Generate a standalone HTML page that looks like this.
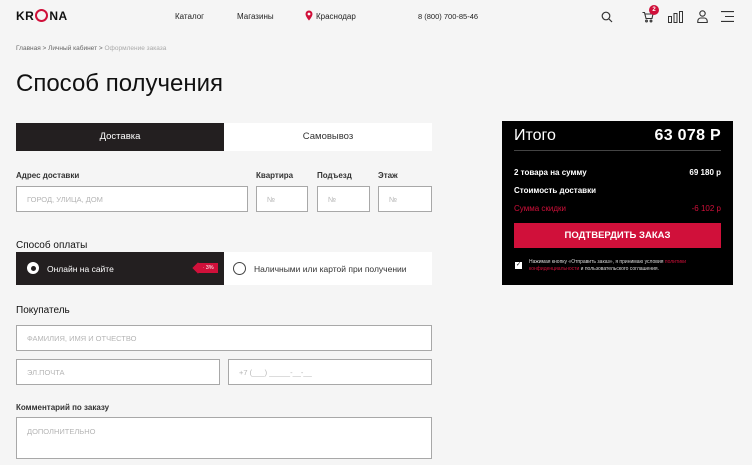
<!DOCTYPE html><html><head><meta charset="utf-8"><style>
*{box-sizing:border-box;margin:0;padding:0}
body{width:752px;height:465px;overflow:hidden;background:#f5f5f5;font-family:"Liberation Sans",sans-serif;color:#222;position:relative}
.a{position:absolute;white-space:nowrap}
.r{position:absolute;white-space:nowrap;right:31px}
.in{position:absolute;background:#fff;border:1px solid #a8a8a8;font-size:7.5px;color:#b5b5b5;padding-left:10px;display:flex;align-items:center}
.lb{font-size:8px;font-weight:bold;color:#333}
</style></head><body>
<div class="a" style="left:16px;top:9px;font-size:12px;font-weight:bold;letter-spacing:0.5px;color:#111">KR<span style="display:inline-block;width:13px;height:13px;border:2px solid #d0103a;border-radius:50%;vertical-align:-2px;margin:0 1px"></span>NA</div>
<div class="a" style="left:175px;top:12px;font-size:8px">Каталог</div>
<div class="a" style="left:237px;top:12px;font-size:8px">Магазины</div>
<svg class="a" style="left:305px;top:10px" width="8" height="11" viewBox="0 0 8 11"><path d="M4 0.5A3.5 3.5 0 0 1 7.5 4C7.5 6.5 4 10.5 4 10.5S0.5 6.5 0.5 4A3.5 3.5 0 0 1 4 .5Z" fill="#d0103a"/><circle cx="4" cy="4" r="1.4" fill="#fff"/></svg>
<div class="a" style="left:316px;top:12px;font-size:8px">Краснодар</div>
<div class="a" style="left:418px;top:12px;font-size:7.5px">8 (800) 700-85-46</div>
<svg class="a" style="left:601px;top:11px" width="12" height="12" viewBox="0 0 12 12" fill="none" stroke="#333" stroke-width="1.2"><circle cx="5" cy="5" r="3.8"/><path d="M8 8l3 3"/></svg>
<svg class="a" style="left:642px;top:11px" width="12" height="12" viewBox="0 0 12 12" fill="none" stroke="#333" stroke-width="1.1"><path d="M0.5 1.5h2l1.5 6h6l1-4.5H3"/><circle cx="4.5" cy="10" r="0.9"/><circle cx="9" cy="10" r="0.9"/></svg>
<div class="a" style="left:649px;top:5px;width:10px;height:10px;border-radius:50%;background:#d0103a;color:#fff;font-size:6px;text-align:center;line-height:10px;font-weight:bold">2</div>
<svg class="a" style="left:668px;top:11px" width="16" height="12" viewBox="0 0 16 12" fill="none" stroke="#333" stroke-width="1"><rect x="0.5" y="5.5" width="3" height="6"/><rect x="6" y="2.5" width="3" height="9"/><rect x="11.5" y="0.5" width="3" height="11"/></svg>
<svg class="a" style="left:697px;top:10px" width="11" height="13" viewBox="0 0 11 13" fill="none" stroke="#333" stroke-width="1.1"><circle cx="5.5" cy="3.5" r="2.7"/><path d="M0.8 12.5v-1.5a3 3 0 0 1 3-3h3.4a3 3 0 0 1 3 3v1.5z"/></svg>
<svg class="a" style="left:721px;top:11px" width="13" height="11" viewBox="0 0 13 11" stroke="#333" stroke-width="1.1"><path d="M0 0.6h13M4 5.5h9M0 10.4h13"/></svg>
<div class="a" style="left:16px;top:45px;font-size:6.5px;color:#666">Главная &gt; Личный кабинет &gt; <span style="color:#aaa">Оформление заказа</span></div>
<div class="a" style="left:16px;top:70px;font-size:24px;color:#111">Способ получения</div>
<div class="a" style="left:16px;top:123px;width:208px;height:28px;background:#231f20;color:#fff;font-size:9.5px;text-align:center;line-height:28px">Доставка</div>
<div class="a" style="left:224px;top:123px;width:208px;height:28px;background:#fff;color:#333;font-size:9.5px;text-align:center;line-height:28px">Самовывоз</div>
<div class="a lb" style="left:16px;top:171px">Адрес доставки</div>
<div class="a lb" style="left:256px;top:171px">Квартира</div>
<div class="a lb" style="left:317px;top:171px">Подъезд</div>
<div class="a lb" style="left:378px;top:171px">Этаж</div>
<div class="in" style="left:16px;top:186px;width:232px;height:26px">ГОРОД, УЛИЦА, ДОМ</div>
<div class="in" style="left:256px;top:186px;width:52px;height:26px">№</div>
<div class="in" style="left:317px;top:186px;width:53px;height:26px">№</div>
<div class="in" style="left:378px;top:186px;width:54px;height:26px">№</div>
<div class="a" style="left:16px;top:240px;font-size:10px;color:#111">Способ оплаты</div>
<div class="a" style="left:16px;top:252px;width:208px;height:33px;background:#231f20"></div>
<div class="a" style="left:27px;top:262px;width:12px;height:12px;border-radius:50%;background:#fff"></div>
<div class="a" style="left:30.5px;top:265.5px;width:5px;height:5px;border-radius:50%;background:#231f20"></div>
<div class="a" style="left:47px;top:264px;font-size:8.5px;color:#fff">Онлайн на сайте</div>
<div class="a" style="left:198px;top:263px;width:20px;height:10px;background:#d0103a;color:#fff;font-size:5.5px;line-height:10px;text-align:center">- 3%</div>
<div class="a" style="left:194px;top:264px;width:8px;height:8px;background:#d0103a;transform:rotate(45deg)"></div>
<div class="a" style="left:224px;top:252px;width:208px;height:33px;background:#fff"></div>
<div class="a" style="left:233px;top:262px;width:13px;height:13px;border-radius:50%;border:1px solid #444"></div>
<div class="a" style="left:254px;top:264px;font-size:8.5px;color:#333">Наличными или картой при получении</div>
<div class="a" style="left:16px;top:305px;font-size:10px;color:#111">Покупатель</div>
<div class="in" style="left:16px;top:325px;width:416px;height:26px">ФАМИЛИЯ, ИМЯ И ОТЧЕСТВО</div>
<div class="in" style="left:16px;top:359px;width:204px;height:26px">ЭЛ.ПОЧТА</div>
<div class="in" style="left:228px;top:359px;width:204px;height:26px">+7 (___) _____-__-__</div>
<div class="a lb" style="left:16px;top:403px">Комментарий по заказу</div>
<div class="in" style="left:16px;top:417px;width:416px;height:42px;align-items:flex-start;padding-top:9px">ДОПОЛНИТЕЛЬНО</div>
<div class="a" style="left:502px;top:121px;width:231px;height:164px;background:#000"></div>
<div class="a" style="left:514px;top:127px;font-size:16px;color:#fff">Итого</div>
<div class="r" style="top:127px;font-size:16px;color:#fff;font-weight:bold;letter-spacing:0.3px">63 078 Р</div>
<div class="a" style="left:514px;top:150px;width:207px;height:1px;background:#444"></div>
<div class="a" style="left:514px;top:168px;font-size:8px;color:#fff;font-weight:bold">2 товара на сумму</div>
<div class="r" style="top:168px;font-size:8px;color:#fff;font-weight:bold">69 180 р</div>
<div class="a" style="left:514px;top:186px;font-size:8px;color:#fff;font-weight:bold">Стоимость доставки</div>
<div class="a" style="left:514px;top:204px;font-size:8px;color:#d0103a">Сумма скидки</div>
<div class="r" style="top:204px;font-size:8px;color:#d0103a">-6 102 р</div>
<div class="a" style="left:514px;top:223px;width:207px;height:25px;background:#d0103a;color:#fff;font-weight:bold;font-size:9.5px;text-align:center;line-height:25px">ПОДТВЕРДИТЬ ЗАКАЗ</div>
<div class="a" style="left:515px;top:262px;width:7px;height:7px;background:#fff;font-size:6px;color:#000;line-height:7px;text-align:center">✓</div>
<div class="a" style="left:529px;top:259px;font-size:5px;line-height:7px;color:#ddd">Нажимая кнопку «Отправить заказ», я принимаю условия <span style="color:#d0103a">политики</span><br><span style="color:#d0103a">конфиденциальности</span> и пользовательского соглашения.</div>
</body></html>
